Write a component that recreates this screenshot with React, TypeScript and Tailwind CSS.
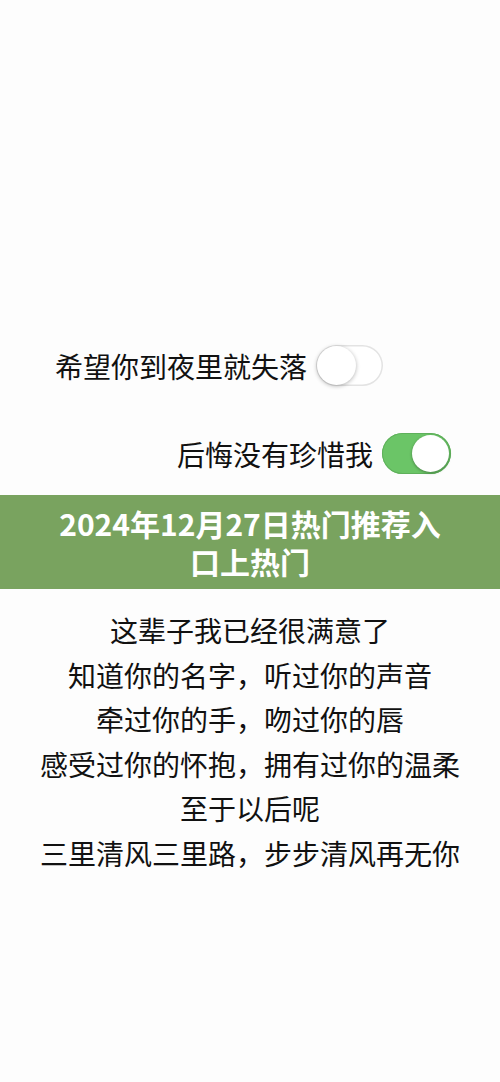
import React from 'react'

const FONT = { fontFamily: '"Noto Sans CJK SC", "Noto Sans", sans-serif' }

const LYRICS = [
  '这辈子我已经很满意了',
  '知道你的名字，听过你的声音',
  '牵过你的手，吻过你的唇',
  '感受过你的怀抱，拥有过你的温柔',
  '至于以后呢',
  '三里清风三里路，步步清风再无你',
]

function Toggle({ on }: { on: boolean }) {
  return on ? (
    <div className="flex h-[41px] w-[69px] items-center justify-end rounded-full bg-[#6bc567] p-[2px] shadow-[inset_0_0_0_1px_#5fb05b]">
      <div className="h-[37px] w-[37px] rounded-full bg-white shadow-[0_1px_3px_rgba(0,0,0,0.35)]" />
    </div>
  ) : (
    <div className="flex h-[41px] w-[67px] items-center rounded-full bg-white p-[1px] shadow-[inset_0_0_0_1.5px_#e3e3e3]">
      <div className="h-[39px] w-[39px] rounded-full bg-white shadow-[0_1px_4px_rgba(0,0,0,0.3)]" />
    </div>
  )
}

export default function App() {
  return (
    <div className="min-h-[1082px] w-[500px] bg-[#fdfdfd] text-[#111111]" style={FONT}>
      <div className="pt-[345px]">
        <div className="flex items-center gap-[9px] pl-[55px]">
          <span className="text-[28px] leading-[40px]">希望你到夜里就失落</span>
          <Toggle on={false} />
        </div>
        <div className="mt-[47px] flex items-center justify-end gap-[9px] pr-[49px]">
          <span className="text-[28px] leading-[40px]">后悔没有珍惜我</span>
          <Toggle on />
        </div>
      </div>

      <div className="mt-[21px] bg-[#79a35f] px-[55px] py-[9px] text-center text-[30px] font-bold leading-[38px] text-white">
        2024年12月27日热门推荐入口上热门
      </div>

      <div className="mt-[19px] flex flex-col items-center text-[28px] leading-[44.5px]">
        {LYRICS.map(line => (
          <div key={line}>{line}</div>
        ))}
      </div>
    </div>
  )
}
